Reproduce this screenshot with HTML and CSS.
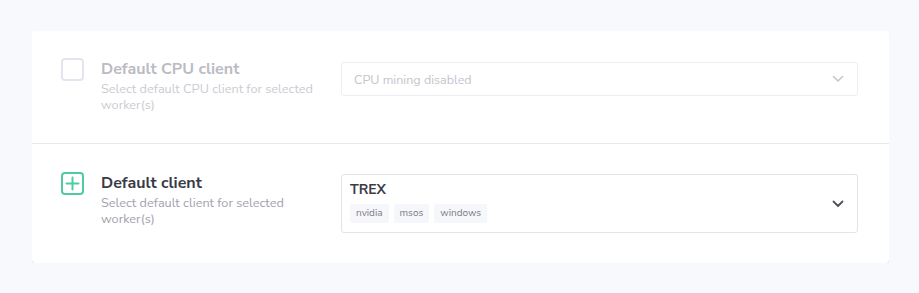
FILE: index.html
```html
<!DOCTYPE html>
<html>
<head>
<meta charset="utf-8">
<link rel="stylesheet" href="styles.css">
</head>
<body>
<div class="card">
  <div class="row row-first disabled">
    <div class="left">
      <span class="check"></span>
      <div class="text">
        <div class="title">Default CPU client</div>
        <div class="sub">Select default CPU client for selected worker(s)</div>
      </div>
    </div>
    <div class="select select-small">
      <span class="placeholder">CPU mining disabled</span>
      <svg class="chev" width="12" height="8" viewBox="0 0 12 8"><path d="M1.5 1.5 L6 6 L10.5 1.5" fill="none" stroke="currentColor" stroke-width="1.6" stroke-linecap="round" stroke-linejoin="round"/></svg>
    </div>
  </div>
  <div class="row row-second">
    <div class="left">
      <span class="check check-on">
        <svg width="15" height="15" viewBox="0 0 15 15"><path d="M7.5 1.5 V13.5 M1.5 7.5 H13.5" stroke="currentColor" stroke-width="2" stroke-linecap="round"/></svg>
      </span>
      <div class="text">
        <div class="title">Default client</div>
        <div class="sub">Select default client for selected worker(s)</div>
      </div>
    </div>
    <div class="select select-big">
      <div class="value">
        <div class="name">TREX</div>
        <div class="tags">
          <span class="tag">nvidia</span>
          <span class="tag">msos</span>
          <span class="tag">windows</span>
        </div>
      </div>
      <svg class="chev chev-dark" width="12" height="8" viewBox="0 0 12 8"><path d="M1.5 1.5 L6 6 L10.5 1.5" fill="none" stroke="currentColor" stroke-width="1.8" stroke-linecap="round" stroke-linejoin="round"/></svg>
    </div>
  </div>
</div>
</body>
</html>
```
FILE: styles.css
```css
html, body {
  margin: 0;
  padding: 0;
}
body {
  background: #f8f9fd;
  font-family: "Nunito Sans", Lato, "Noto Sans", sans-serif;
  padding: 31px 30px 0 32px;
}
.card {
  background: #fff;
  border-radius: 4px;
  box-shadow: 0 2px 0 #e6e8ee;
  width: 857px;
}
.row {
  display: flex;
  align-items: flex-start;
  padding: 27px 31px 0 29px;
  box-sizing: border-box;
}
.row-first {
  height: 113px;
  border-bottom: 1px solid #e9e9f1;
}
.row-second {
  height: 119px;
  padding-top: 28px;
}
.left {
  display: flex;
  align-items: flex-start;
  width: 280px;
  flex: none;
}
.check {
  width: 23px;
  height: 23px;
  box-sizing: border-box;
  border: 2px solid #e3e4ef;
  border-radius: 4px;
  flex: none;
  display: flex;
  align-items: center;
  justify-content: center;
}
.check-on {
  border-color: #4fcba0;
  color: #4fcba0;
}
.text {
  margin-left: 17px;
  width: 222px;
}
.title {
  font-size: 16px;
  font-weight: 700;
  line-height: 22px;
  color: #3a3a46;
}
.disabled .title {
  color: #bbbbc3;
}
.sub {
  font-size: 12.7px;
  line-height: 16px;
  margin-top: 1px;
  color: #a2a2ad;
}
.disabled .sub {
  color: #cbcbd2;
}
.select {
  flex: 1;
  box-sizing: border-box;
  border: 1px solid #ededf2;
  border-radius: 3px;
  display: flex;
  align-items: center;
  justify-content: space-between;
}
.select-small {
  height: 34px;
  margin-top: 4px;
  padding: 0 13px 0 12px;
}
.placeholder {
  font-size: 12.5px;
  color: #c4c4cc;
}
.chev {
  color: #c6c6ce;
}
.chev-dark {
  color: #50505b;
}
.select-big {
  height: 59px;
  margin-top: 2px;
  border-color: #e3e3ea;
  padding: 0 13px 0 8px;
}
.value {
  display: flex;
  flex-direction: column;
}
.name {
  font-size: 14px;
  font-weight: 700;
  color: #3c3c47;
  line-height: 16px;
  margin-top: -2px;
}
.tags {
  display: flex;
  gap: 5px;
  margin-top: 6px;
}
.tag {
  background: #f6f7fb;
  border-radius: 2px;
  font-size: 10px;
  color: #7c7c88;
  line-height: 19px;
  padding: 0 6px;
}
```
